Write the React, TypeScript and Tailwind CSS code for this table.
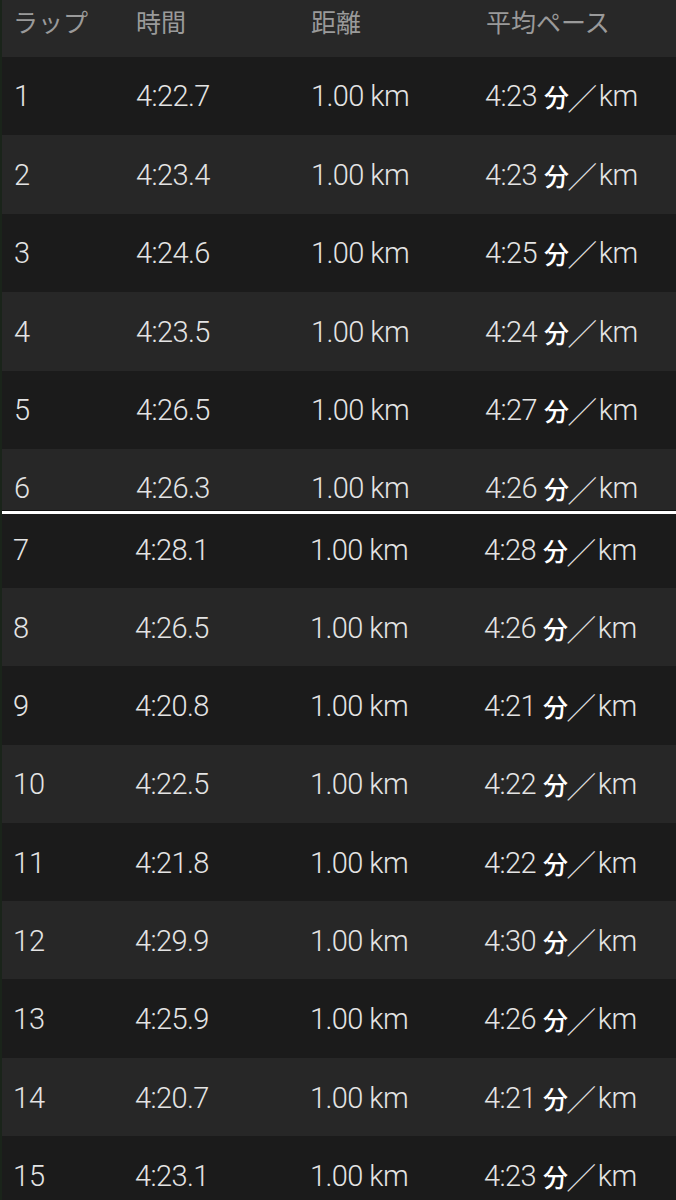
import React from "react";

const TOP = [
  ["1", "4:22.7", "4:23"],
  ["2", "4:23.4", "4:23"],
  ["3", "4:24.6", "4:25"],
  ["4", "4:23.5", "4:24"],
  ["5", "4:26.5", "4:27"],
  ["6", "4:26.3", "4:26"],
];

const BOTTOM = [
  ["7", "4:28.1", "4:28"],
  ["8", "4:26.5", "4:26"],
  ["9", "4:20.8", "4:21"],
  ["10", "4:22.5", "4:22"],
  ["11", "4:21.8", "4:22"],
  ["12", "4:29.9", "4:30"],
  ["13", "4:25.9", "4:26"],
  ["14", "4:20.7", "4:21"],
  ["15", "4:23.1", "4:23"],
];

const num = "font-['Roboto','Noto_Sans_CJK_JP',sans-serif] font-light";
const cjk = "font-['Noto_Sans_CJK_JP',sans-serif]";

const LapRow = ({ lap, time, pace, dark, className = "" }: { lap: string; time: string; pace: string; dark: boolean; className?: string }) => (
  <div
    className={`flex items-center shrink-0 text-[29px] text-[#e4e4e4] ${num} ${
      dark ? "bg-[#1b1b1b]" : "bg-[#272727]"
    } ${className}`}
  >
    <span className="w-[134px] pl-[12px]">{lap}</span>
    <span className="w-[175px] tracking-[-0.6px]">{time}</span>
    <span className="w-[174px] tracking-[-0.6px]">1.00 km</span>
    <span className="flex items-center tracking-[-0.6px]">
      {pace}
      <span className={`${cjk} ml-[7px] font-medium text-white text-[25px]`}>分</span>
      <span className={`${cjk} font-light text-[30px] text-[#e4e4e4] -mx-[1px]`}>／</span>
      <span className="ml-[3px]">km</span>
    </span>
  </div>
);

export default function App() {
  return (
    <div className="w-[676px] h-[1200px] overflow-hidden bg-[#1b1b1b] border-l-2 border-[#1a241a] flex flex-col">
      {/* Header */}
      <div className={`flex h-[57px] shrink-0 bg-[#282828] pt-[3px] text-[25px] text-[#9a9a9a] ${cjk}`}>
        <span className="w-[134px] pl-[11px]">ラップ</span>
        <span className="w-[175px]">時間</span>
        <span className="w-[175px]">距離</span>
        <span>平均ペース</span>
      </div>

      {/* first capture, cut at the seam */}
      <div className="h-[453px] shrink-0 overflow-hidden flex flex-col">
        {TOP.map(([lap, time, pace], i) => (
          <LapRow key={lap} lap={lap} time={time} pace={pace} dark={i % 2 === 0} className="h-[78.4px] pt-[2px]" />
        ))}
      </div>

      {/* seam */}
      <div className="h-[1px] shrink-0 bg-[#111]" />
      <div className="h-[3px] shrink-0 bg-white" />

      {/* second capture */}
      <div className="flex flex-col -ml-[1px]">
        <LapRow lap="7" time={BOTTOM[0][1]} pace={BOTTOM[0][2]} dark className="h-[74px]" />
        {BOTTOM.slice(1).map(([lap, time, pace], i) => (
          <LapRow key={lap} lap={lap} time={time} pace={pace} dark={i % 2 === 1} className="h-[78.3px] pt-[3px]" />
        ))}
      </div>
    </div>
  );
}
